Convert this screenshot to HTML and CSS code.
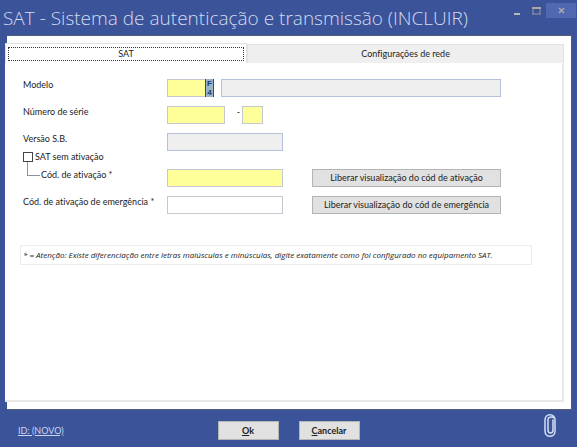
FILE: index.html
```
<!DOCTYPE html>
<html lang="pt-BR">
<head>
    <meta charset="UTF-8">
    <meta name="viewport" content="width=device-width, initial-scale=1.0">
    <title>SAT - Sistema de autenticação e transmissão</title>
    <link rel="stylesheet" href="styles.css">
</head>
<body>
    <header class="titlebar">
        <h1>SAT - Sistema de autenticação e transmissão (INCLUIR)</h1>
        <div class="window-buttons">
            <button type="button" aria-label="Minimizar">
                <svg width="9" height="9" viewBox="0 0 9 9"><path d="M2 8h6" stroke="#b9b7b5" stroke-width="2"/></svg>
            </button>
            <button type="button" aria-label="Maximizar">
                <svg width="9" height="9" viewBox="0 0 9 9"><path d="M1 1v7M8 1v7M0 8h9" fill="none" stroke="#96979f" stroke-width="1"/><path d="M0 2h9" stroke="#a9a8a6" stroke-width="2"/></svg>
            </button>
            <button type="button" class="close" aria-label="Fechar">
                <svg width="9" height="9" viewBox="0 0 9 9"><path d="M2 2l5 5M7 2l-5 5" stroke="#a9a9ae" stroke-width="1.500"/></svg>
            </button>
        </div>
    </header>

    <main class="panel">
        <div class="tabs" role="tablist">
            <button type="button" class="tab active" role="tab" aria-selected="true"><span>SAT</span></button>
            <button type="button" class="tab" role="tab" aria-selected="false">Configurações de rede</button>
        </div>

        <div class="pane" role="tabpanel">
            <form class="form" id="sat-form">
                <div class="row">
                    <label for="modelo">Modelo</label>
                    <div class="lookup">
                        <input type="text" id="modelo" class="required">
                        <button type="button" class="f4" aria-label="Pesquisar modelo"><span>F</span><span>4</span></button>
                    </div>
                    <input type="text" class="description" aria-label="Descrição do modelo" readonly>
                </div>

                <div class="row">
                    <label for="serie">Número de série</label>
                    <div class="serial">
                        <input type="text" id="serie" class="required">
                        <span>-</span>
                        <input type="text" class="required digit" aria-label="Dígito">
                    </div>
                </div>

                <div class="row">
                    <label for="versao">Versão S.B.</label>
                    <input type="text" id="versao" class="field" readonly>
                </div>

                <div class="check">
                    <input type="checkbox" id="sem-ativacao">
                    <label for="sem-ativacao">SAT sem ativação</label>
                </div>

                <div class="row">
                    <label for="codigo" class="child">Cód. de ativação *</label>
                    <input type="text" id="codigo" class="field required">
                    <button type="button" class="button">Liberar visualização do cód de ativação</button>
                </div>

                <div class="row">
                    <label for="emergencia">Cód. de ativação de emergência *</label>
                    <input type="text" id="emergencia" class="field">
                    <button type="button" class="button">Liberar visualização do cód de emergência</button>
                </div>
            </form>

            <p class="note">* = Atenção: Existe diferenciação entre letras maiúsculas e minúsculas, digite exatamente como foi configurado no equipamento SAT.</p>
        </div>
    </main>

    <footer class="footer">
        <a href="#" class="record">ID: (NOVO)</a>
        <div class="actions">
            <button type="submit" form="sat-form" class="button"><u>O</u>k</button>
            <button type="button" class="button"><u>C</u>ancelar</button>
        </div>
        <button type="button" class="attach" aria-label="Anexos">
            <svg width="14" height="26" viewBox="0 0 14 26"><path d="M10 7v10c0 4-5 4-5 0V7c0-4 7-4 7 0v11c0 7-10 7-10 0V7c0-7 10-7 10 0" fill="none" stroke="#d5def4" stroke-width="1.500" stroke-linecap="round"/></svg>
        </button>
    </footer>
</body>
</html>
```
FILE: styles.css
```
* {
    box-sizing: border-box;
}

body {
    margin: 0;
    min-height: 100vh;
    display: flex;
    flex-direction: column;
    background: #3b5399;
    color: #222;
    font-family: Lato, "Open Sans", sans-serif;
    font-size: 9px;
    font-variant-ligatures: none;
    line-height: 12px;
}

button,
input {
    margin: 0;
    padding: 0;
    border: 0;
    border-radius: 0;
    color: inherit;
    font: inherit;
    font-variant-ligatures: none;
}

/* Title bar */
.titlebar {
    display: flex;
    justify-content: space-between;
    align-items: flex-start;
    height: 35px;
    padding: 3px 1px 0 3px;
}

.titlebar h1 {
    margin: 0;
    padding-top: 3px;
    color: #d3dcf1;
    font-family: "Open Sans", "Noto Sans", sans-serif;
    font-size: 19px;
    font-weight: 300;
    line-height: 24px;
    white-space: nowrap;
}

.window-buttons {
    display: flex;
}

.window-buttons button {
    display: flex;
    align-items: center;
    justify-content: center;
    width: 20px;
    height: 15px;
    background: none;
}

.window-buttons .close {
    width: 30px;
    background: #5068b0;
}

/* White area with the tabs */
.panel {
    flex: 1;
    display: flex;
    flex-direction: column;
    margin: 0 5px 0 7px;
    padding: 7px 7px 7px 0;
    background: #fff;
    border-top: 1px solid #555e78;
    border-right: 1px solid #555e78;
    border-bottom: 1px solid #555e78;
}

.tabs {
    display: flex;
    align-items: flex-end;
    margin-left: -2px;
}

.tab {
    flex: 4;
    height: 19px;
    background: #efefef;
    border: 1px solid #e2e2e2;
    border-bottom: 0;
}

.tab.active {
    flex: 3;
    height: 20px;
    padding: 2px;
    background: #fff;
}

.tab.active span {
    display: block;
    border: 1px dotted #333;
}

.pane {
    flex: 1;
    margin-left: -2px;
    padding: 16px 30px 16px 15px;
    background: #fff;
    border-right: 2px solid #e8e8e8;
    border-bottom: 2px solid #e8e8e8;
}

/* Form */
.form {
    padding: 0 31px 0 3px;
}

.row {
    display: grid;
    grid-template-columns: 144px 116px 1fr;
    margin-bottom: 9px;
}

.row label {
    white-space: nowrap;
}

.row input {
    height: 18px;
    background: #fff;
    border: 1px solid #c6c8cf;
}

.row input.required {
    background: #ffff99;
}

.row input[readonly] {
    background: #efefef;
    border-color: #b2c3da;
}

.row .button {
    margin-left: 29px;
}

.row .description {
    margin-left: -62px;
}

.field {
    width: 100%;
}

.lookup {
    display: flex;
    width: 47px;
}

.lookup input {
    width: 38px;
    border-right: 0;
}

.f4 {
    display: flex;
    flex-direction: column;
    width: 9px;
    height: 18px;
    background: #9db4c6;
    border-left: 1px solid #1f5284;
    border-right: 1px solid #1f5284;
    color: #0f4078;
    font-family: "Liberation Sans", sans-serif;
    font-size: 8px;
    font-weight: bold;
    line-height: 9px;
    text-align: center;
}

.serial {
    display: flex;
}

.serial input {
    width: 58px;
}

.serial span {
    width: 17px;
    padding-right: 2px;
    text-align: right;
}

.serial .digit {
    width: 21px;
}

.check {
    display: flex;
    align-items: flex-start;
    gap: 2px;
    height: 18px;
    margin-top: -9px;
}

.check input {
    appearance: none;
    width: 10px;
    height: 10px;
    margin-top: 1px;
    background: #fff;
    border: 1px solid #444;
}

/* Connector from the tick box to its dependent field */
.row .child {
    position: relative;
    padding-left: 18px;
}

.child::before {
    content: "";
    position: absolute;
    left: 4px;
    top: -7px;
    width: 12px;
    height: 13px;
    border-left: 1px solid #8c93a5;
    border-bottom: 1px solid #8c93a5;
}

.button {
    height: 18px;
    background: #e1e1e1;
    border: 1px solid #b4b4b4;
    white-space: nowrap;
}

.note {
    margin: 31px 0 0;
    padding: 3px 2px;
    border: 1px solid #ececec;
    font-family: "Open Sans", "Noto Sans", sans-serif;
    font-size: 8px;
    font-style: italic;
    white-space: nowrap;
}

/* Footer */
.footer {
    display: grid;
    grid-template-columns: 1fr auto 1fr;
    align-items: center;
    height: 37px;
    padding: 0 20px 0 20px;
}

.record {
    margin-left: -2px;
    padding-top: 4px;
    color: #c8d5f3;
}

.actions {
    display: flex;
    gap: 20px;
    padding-top: 4px;
}

.actions .button {
    width: 61px;
    height: 19px;
    font-weight: bold;
}

.attach {
    align-self: start;
    justify-self: end;
    height: 26px;
    margin-top: 3px;
    background: none;
}

.attach svg {
    display: block;
}
```
